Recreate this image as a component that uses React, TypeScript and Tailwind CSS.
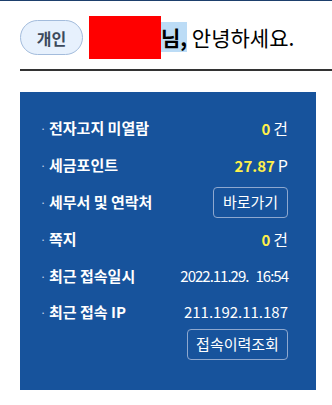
import React from "react";

const font = { fontFamily: '"Noto Sans CJK KR", "Noto Sans", sans-serif' };

function Row({
  label,
  children,
  h = "h-[37px]",
}: {
  label: string;
  children?: React.ReactNode;
  h?: string;
}) {
  return (
    <div className={`flex items-center justify-between ${h}`}>
      <div className="flex items-center">
        <span className="w-[9px] text-[11px] text-[#c9d6ea] leading-none">·</span>
        <span className="text-[15px] font-bold text-white">{label}</span>
      </div>
      <div className="flex items-center text-white">{children}</div>
    </div>
  );
}

function Count({ n, unit }: { n: string; unit: string }) {
  return (
    <span className="flex items-baseline">
      <span className="text-[15px] font-bold text-[#fff04a]">{n}</span>
      <span className="ml-[3px] text-[16px] text-white">{unit}</span>
    </span>
  );
}

export default function App() {
  return (
    <div className="w-[332px] h-[405px] bg-white overflow-hidden" style={font}>
      <div className="h-[1px] bg-[#1d3f6c]" />
      <div className="pl-[20px] pt-[15px]">
        <div className="flex items-center h-[43px]">
          <span className="flex items-center justify-center w-[63px] h-[35px] rounded-full border border-[#a3bcdc] bg-[#e7f1fd] text-[16px] font-bold text-[#3d4a5c]">
            개인
          </span>
          <span className="ml-[6px] inline-block w-[72px] h-[43px] bg-[#ff0000]" />
          <span className="text-[21px] text-black leading-[25px] whitespace-nowrap">
            <span className="font-bold bg-[#bcdcf6]">님,</span> 안녕하세요.
          </span>
        </div>
        <div className="mt-[10px] h-[2px] bg-[#333333]" />
      </div>
      <div className="ml-[20px] mt-[21px] w-[296px] h-[298px] bg-[#17539c] pl-[20px] pr-[28px] pt-[18px]">
        <Row label="전자고지 미열람">
          <Count n="0" unit="건" />
        </Row>
        <Row label="세금포인트">
          <Count n="27.87" unit="P" />
        </Row>
        <Row label="세무서 및 연락처">
          <button className="w-[75px] h-[31px] rounded-[4px] border border-[#8ea8cf] text-[15px] text-white">
            바로가기
          </button>
        </Row>
        <Row label="쪽지">
          <Count n="0" unit="건" />
        </Row>
        <Row label="최근 접속일시">
          <span className="text-[15px] tracking-[-1px] whitespace-pre">2022.11.29.   16:54</span>
        </Row>
        <Row label="최근 접속 IP" h="h-[34px]">
          <span className="text-[15px]">211.192.11.187</span>
        </Row>
        <div className="flex justify-end">
          <button className="w-[101px] h-[31px] rounded-[4px] border border-[#8ea8cf] text-[15px] text-white">
            접속이력조회
          </button>
        </div>
      </div>
    </div>
  );
}
